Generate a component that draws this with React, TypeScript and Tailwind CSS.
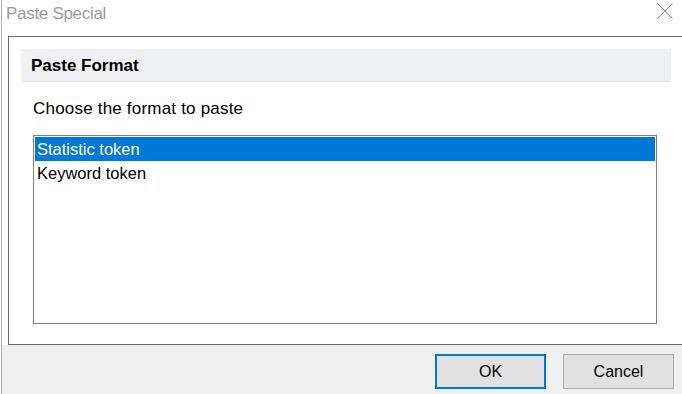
import React from 'react'

const font = { fontFamily: '"Liberation Sans", Arial, sans-serif' }

function CloseIcon() {
  return (
    <svg width="16" height="16" viewBox="0 0 16 16" className="block">
      <path d="M0.5 0.5 L15.5 15.5 M15.5 0.5 L0.5 15.5" stroke="#8a8a8a" strokeWidth="1" fill="none" />
    </svg>
  )
}

const formats = ['Statistic token', 'Keyword token']

export default function App() {
  const [selected, setSelected] = React.useState(0)

  return (
    <div
      className="w-[682px] h-[394px] overflow-hidden bg-white pl-px text-black"
      style={font}
    >
      <div className="flex h-full flex-col border-l border-[#ababab]">
        {/* title bar */}
        <div className="flex h-9 shrink-0 items-start justify-between pl-1 pr-[9px] pt-1">
          <span className="text-[17px] leading-[20px] tracking-[-0.3px] text-[#9c9c9c]">
            Paste Special
          </span>
          <div className="-mt-px">
            <CloseIcon />
          </div>
        </div>

        {/* body */}
        <div className="ml-[6px] -mr-4 h-[309px] shrink-0 border-y border-l border-[#6b6b6b]">
          <div className="ml-3 mt-3 h-[33px] w-[650px] border-b border-[#e1e1e7] bg-[#eff0f3] pl-[10px] pt-[2px]">
            <span className="text-[17px] font-bold leading-[30px]">Paste Format</span>
          </div>

          <p className="ml-6 mt-[17px] text-[17px] leading-[20px] tracking-[0.2px]">
            Choose the format to paste
          </p>

          <ul className="ml-6 mt-4 h-[189px] w-[624px] border border-[#7f7f7f] p-px">
            {formats.map((f, i) => (
              <li
                key={f}
                onClick={() => setSelected(i)}
                className={
                  i === selected
                    ? 'h-6 bg-[#0078d7] pl-[2px] text-[16.5px] leading-6 text-white'
                    : 'h-6 pl-[2px] text-[16.5px] leading-6 text-black'
                }
              >
                {f}
              </li>
            ))}
          </ul>
        </div>

        {/* footer */}
        <div className="flex flex-1 items-start justify-end gap-[17px] bg-[#f0f0f0] pr-2 pt-[9px]">
          <button className="h-[35px] w-[111px] border-2 border-[#0078d7] bg-[#e1e1e1] text-[16px] leading-none">
            OK
          </button>
          <button className="h-[35px] w-[111px] border border-[#adadad] bg-[#e1e1e1] text-[16px] leading-none">
            Cancel
          </button>
        </div>
      </div>
    </div>
  )
}
